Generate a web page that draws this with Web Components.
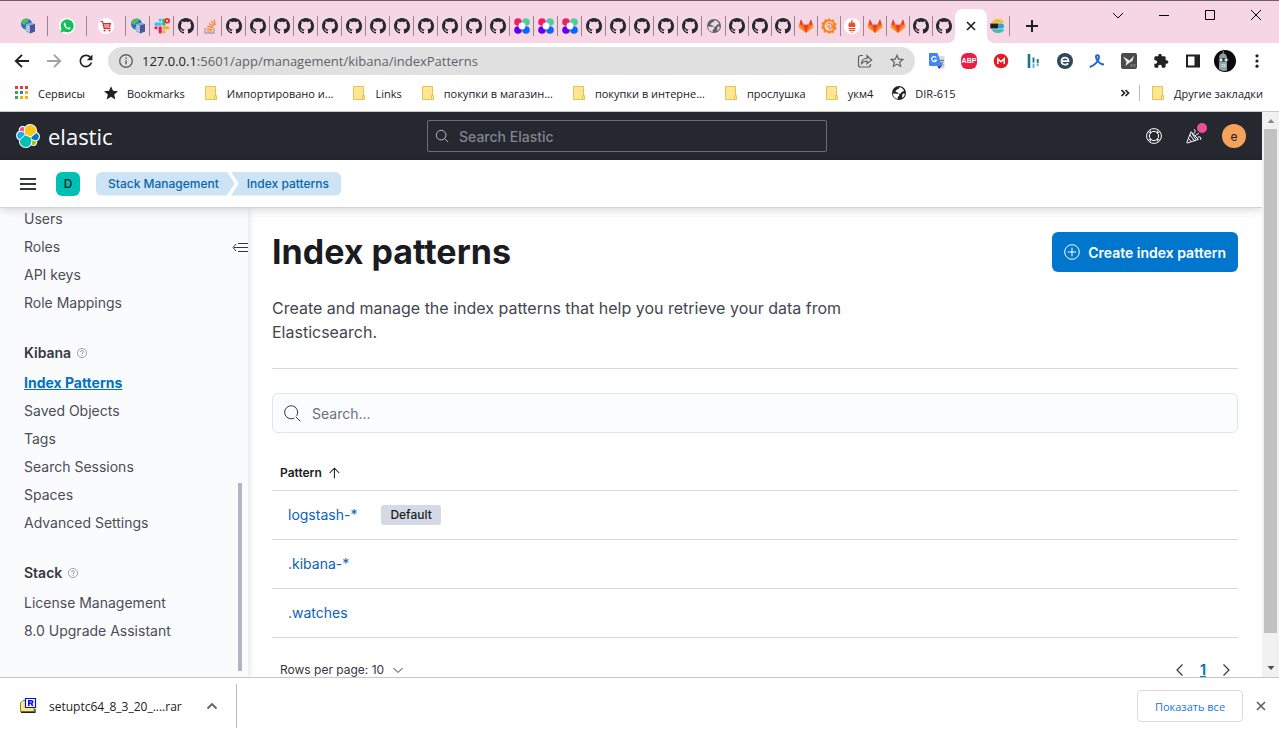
<!DOCTYPE html>
<html lang="en">
<head>
<meta charset="utf-8">
<title>Index patterns - Elastic</title>
<style>
  html, body { margin: 0; height: 100%; }
  body { font-family: Inter, "Liberation Sans", sans-serif; font-size: 14px; color: #343741; background: #fff; overflow: hidden; }
</style>
</head>
<body>
<browser-window></browser-window>
<script>
const GH = '<path fill="#24292f" d="M8 0C3.58 0 0 3.58 0 8c0 3.54 2.29 6.53 5.47 7.59.4.07.55-.17.55-.38 0-.19-.01-.82-.01-1.49-2.01.37-2.53-.49-2.69-.94-.09-.23-.48-.94-.82-1.13-.28-.15-.68-.52-.01-.53.63-.01 1.08.58 1.23.82.72 1.21 1.87.87 2.33.66.07-.52.28-.87.51-1.07-1.78-.2-3.64-.89-3.64-3.95 0-.87.31-1.59.82-2.15-.08-.2-.36-1.02.08-2.12 0 0 .67-.21 2.2.82.64-.18 1.32-.27 2-.27.68 0 1.36.09 2 .27 1.53-1.04 2.2-.82 2.2-.82.44 1.1.16 1.92.08 2.12.51.56.82 1.27.82 2.15 0 3.07-1.87 3.75-3.65 3.95.29.25.54.73.54 1.48 0 1.07-.01 1.93-.01 2.2 0 .21.15.46.55.38A8.01 8.01 0 0016 8c0-4.42-3.58-8-8-8z"/>';
const DISC = 'M3 13c2.500-1 5 .3 6.500.2 2-.2 3.300.6 3 2.300-.3 1.700-2 1.500-2.500 2.700-.3.800 0 1.800.5 2.800C6 20.500 3 17.500 3 13zM8 8c1.500-2 4.200-1 4.700-4.500 3 .3 5.800 2.300 7 5.500-1.200 1-2.800.4-3.700 1.400-1.200 1.300-.8 2.600-3 2.800-2 .2-2-1.400-3.400-2-1-.4-2.800.2-2.800-1.300 0-.8.700-1.300 1.200-1.900zM18 13c1-.3 2 0 2.800.5-.5 2.500-1.800 4.500-3.800 5.800-.8-2 .2-3.300 0-4.500-.1-.8.300-1.500 1-1.800z';
const ELASTIC = ['#fec514|M12.58 13.787l7.002 3.211 7.066-6.213a7.849 7.849 0 00.152-1.557c0-4.287-3.478-7.77-7.752-7.77a7.757 7.757 0 00-6.399 3.373l-1.176 6.118 1.107 2.838z',
  '#00bfb3|M5.333 21.228A7.964 7.964 0 005.181 22.8c0 4.3 3.49 7.797 7.781 7.797a7.776 7.776 0 006.436-3.4l1.166-6.1-1.556-2.985-7.03-3.213-6.645 6.329z',
  '#f04e98|M5.288 9.067l4.8 1.137L11.14 4.73a3.785 3.785 0 00-5.852 4.337z',
  '#1ba9f5|M4.872 10.214a5.324 5.324 0 00-3.36 5.018c0 2.2 1.362 4.164 3.407 4.944l6.733-6.104-1.236-2.649-5.544-1.21z',
  '#93c90e|M20.873 27.187a3.759 3.759 0 002.285.78 3.79 3.79 0 003.581-5.052l-4.802-1.125-1.064 5.397z',
  '#07c|M21.848 20.563l5.285 1.238a5.324 5.324 0 003.36-5.018 5.297 5.297 0 00-3.415-4.93l-6.91 6.066 1.68 2.644z'].map(s => s.split('|'));

// name: [viewBox size, markup]
const ICONS = {
  github: [16, GH],
  server: [16, '<circle cx="6.5" cy="6" r="5.5" fill="#1f6fd0"/><path d="M2 3c2-2.500 5-3 7-1.500L8 4 6 5 5 7 2 6zM5 9l3 .5-1 2H5z" fill="#4fc04a"/><path d="M6 6l5-1.500 4 1.500v7.500l-5 2-4-2z" fill="#8fa6cf"/><path d="M10 7.500l5-1.500v7.500l-5 2z" fill="#46588f"/><path d="M6.500 8l3 1M6.500 10l3 1M6.500 12l3 1" stroke="#e6edfb" stroke-width=".9"/>'],
  whatsapp: [16, '<circle cx="8" cy="8" r="8" fill="#fff"/><path d="M1.500 14.500l1-3.500a6.500 6.500 0 1 1 2.500 2.500z" fill="#12c157"/><path d="M5.700 4.500c-.8.4-1.200 1.300-.8 2.500.8 2.400 2.400 3.900 4.700 4.400 1 .2 1.900-.5 2-1.500L9.900 9l-.9.900C7.800 9.400 7 8.600 6.500 7.500l.7-.9z" fill="#fff"/>'],
  cart: [16, '<circle cx="8" cy="8" r="8" fill="#fff"/><path d="M2.500 3.500h2l1.700 7h6.300M5 5.500h7.500l-1 3.500H6M5.500 7h6.500" fill="none" stroke="#cf2e2e" stroke-width="1.100"/><circle cx="6.500" cy="12.500" r="1" fill="#cf2e2e"/><circle cx="11.500" cy="12.500" r="1" fill="#cf2e2e"/>'],
  slack: [16, '<g fill="none" stroke-width="3.200" stroke-linecap="round"><path d="M6.200 2v.1M2 6.200h4.200" stroke="#36c5f0"/><path d="M9.800 2v4.200" stroke="#2eb67d"/><path d="M14 9.800H9.800M9.800 14v-.1" stroke="#ecb22e"/><path d="M6.200 14V9.800M2 9.800h.1" stroke="#e01e5a"/></g><circle cx="13.200" cy="2.800" r="2.800" fill="#eb2d2d"/><circle cx="13.200" cy="2.800" r="1" fill="#fff"/>'],
  stack: [16, '<path d="M3 10v5h9v-5" fill="none" stroke="#a5a2a8" stroke-width="1.300"/><path d="M4.700 13h5.600M4.800 10.800l5.600.6M5.400 8.200l5.300 1.500M7 5.400l4.500 3.200M9.400 3l3 4.500M12.200 1.500l1 5.500" stroke="#f48024" stroke-width="1.200"/>'],
  dots4: [16, '<circle cx="4" cy="4" r="3.800" fill="#ef2060"/><circle cx="12" cy="4" r="3.800" fill="#48d0a0"/><circle cx="4" cy="12" r="3.800" fill="#6200ee"/><circle cx="12" cy="12" r="3.800" fill="#0a66ff"/><circle cx="8" cy="8" r="3.400" fill="#fff"/>'],
  globegray: [24, '<circle cx="12" cy="12" r="10.500" fill="#5f6368"/><path fill="#f0d6e3" d="' + DISC + '"/>'],
  globe: [24, '<circle cx="12" cy="12" r="10.500" fill="#202124"/><path fill="#fff" d="' + DISC + '"/>'],
  gitlab: [16, '<path d="M8 15L.5 9.300 3 1.300l2.400 5.500h5.200L13 1.300l2.500 8z" fill="#fc6d26"/><path d="M3 1.300l2.400 5.500H1.300zM13 1.300l-2.400 5.500h4.100zM8 15L5.400 6.800h5.200z" fill="#e24329"/><path d="M1.300 6.800L.5 9.300 8 15zM14.700 6.800l.8 2.500L8 15z" fill="#fca326"/>'],
  grafana: [16, '<path d="M8 0l2 2 3-.7.300 2.900 2.500 1.600-1.300 2.500 1.300 2.600-2.600 1.300-.5 2.800-2.900-.3L8 16l-2-1.700-3 .3-.4-2.900L0 10l1.300-2.500L.3 4.800l2.700-1L3.800 1l2.700.8z" fill="#f58a25"/><path d="M11.500 10.500a4 4 0 1 1 .3-4.300M8 10.500c-3 .3-3-4.200 0-4 2.500.2 2.500 3 .3 2.800" fill="none" stroke="#f6d5e4" stroke-width="1.300"/>'],
  prometheus: [16, '<circle cx="8" cy="8" r="8" fill="#fff"/><path d="M8 1c1.500 2-.3 2.500 1 4 .9-.6.700-1.500.7-1.500 1.500 2 2.300 3.500 1.500 5.500H4.800c-.9-2-.2-3.500.9-5 0 1 .5 1.500.8 1.500C6 4 8 3 8 1zM4.500 10h7v1.200h-7zM5 12h6v1H5zM6.200 13.700h3.600L8 14.700z" fill="#e6522c"/>'],
  elasticBar: [16, '<path d="M1.500 4.800a7.400 7.400 0 0 1 13 0z" fill="#f4bd19"/><path d="M.3 5.500H8v5H.3z" fill="#222"/><path d="M8 5.500h3.500a2.500 2.500 0 0 1 0 5H8z" fill="#28a4e0"/><path d="M1.500 11.200h13a7.400 7.400 0 0 1-13 0z" fill="#3ebeb0"/>'],
  x: [16, '<path d="M4 4l8 8M12 4l-8 8" stroke="currentColor" stroke-width="1.700"/>'],
  plus: [16, '<path d="M8 2v12M2 8h12" stroke="currentColor" stroke-width="2"/>'],
  wdown: [16, '<path d="M3 6l5 5 5-5" fill="none" stroke="currentColor" stroke-width="1"/>'],
  wmin: [16, '<path d="M3 8.500h10" stroke="currentColor"/>'],
  wmax: [16, '<path d="M3.500 3.500h9v9h-9z" fill="none" stroke="currentColor"/>'],
  wclose: [16, '<path d="M3 3l10 10M13 3L3 13" stroke="currentColor"/>'],
  back: [16, '<path d="M15 8H2M8 1.800L1.800 8 8 14.200" fill="none" stroke="currentColor" stroke-width="1.900"/>'],
  forward: [16, '<path d="M1 8h13M8 1.800L14.200 8 8 14.200" fill="none" stroke="currentColor" stroke-width="1.900"/>'],
  reload: [24, '<path fill="currentColor" transform="translate(-2.400 -2.400) scale(1.200)" d="M17.650 6.350C16.200 4.900 14.210 4 12 4c-4.420 0-7.990 3.580-7.990 8s3.570 8 7.990 8c3.730 0 6.840-2.550 7.730-6h-2.080c-.82 2.330-3.040 4-5.650 4-3.310 0-6-2.690-6-6s2.690-6 6-6c1.660 0 3.140.69 4.220 1.780L13 11h7V4l-2.350 2.350z"/>'],
  info: [16, '<circle cx="8" cy="8" r="6.300" fill="none" stroke="currentColor" stroke-width="1.400"/><path d="M8 7.200v4M8 4.500v1.500" stroke="currentColor" stroke-width="1.500"/>'],
  share: [16, '<path d="M6 2.500H3.500a2 2 0 0 0-2 2v7.500a2 2 0 0 0 2 2h8a2 2 0 0 0 2-2V11" fill="none" stroke="currentColor" stroke-width="1.200"/><path d="M4.500 10.500c.3-3.500 2-5 5.500-5V2.700L14.700 7 10 10.800V8.200c-2.500 0-4 .5-5.500 2.300z" fill="none" stroke="currentColor" stroke-width="1.200"/>'],
  starline: [24, '<path fill="currentColor" transform="translate(-1.200 -1.200) scale(1.100)" d="M22 9.240l-7.190-.62L12 2 9.190 8.630 2 9.240l5.460 4.730L5.820 21 12 17.270 18.180 21l-1.630-7.030L22 9.240zM12 15.400l-3.760 2.270 1-4.280-3.320-2.880 4.380-.38L12 6.100l1.710 4.040 4.380.38-3.320 2.880 1 4.280L12 15.400z"/>'],
  star: [24, '<path fill="#202124" d="M12 17.800l6.500 4-1.700-7.500 5.700-5-7.500-.7L12 1.700 9 8.600l-7.500.7 5.700 5-1.700 7.500z"/>'],
  apps: [16, '<g><path d="M1 1h3v3H1zM6 1h3v3H6zM11 1h3v3h-3z" fill="#e33e33"/><path d="M1 6h3v3H1z" fill="#34a853"/><path d="M6 6h3v3H6z" fill="#2a7de9"/><path d="M11 6h3v3h-3z" fill="#f4b400"/><path d="M1 11h3v3H1z" fill="#34a853"/><path d="M6 11h3v3H6zM11 11h3v3h-3z" fill="#f4b400"/></g>'],
  folder: [16, '<path d="M2.500 1.500h10v13h-10z" fill="#ffe694" stroke="#e8c34f"/><path d="M11.500 14.500v-4h2v4z" fill="#ffe694" stroke="#e8c34f"/>'],
  translate: [16, '<path d="M6 3h9.500v12.500H9z" fill="#d8dadf"/><path d="M0 0h8.500L13 13H1.500A1.500 1.500 0 0 1 0 11.500z" fill="#4285f4"/><path d="M8.500 13H13l-3 3z" fill="#2347c5"/><path d="M7.300 4.700A2.500 2.500 0 1 0 7.500 7H5.200" fill="none" stroke="#fff" stroke-width="1.200"/><path d="M10.500 7.500H15M12.700 6.500v1M11.500 12.500l2.700-4M11.500 9l3 3.500" stroke="#68707c" stroke-width=".9" fill="none"/>'],
  mega: [16, '<circle cx="8" cy="8" r="7.300" fill="#e51b23"/><path d="M4.800 11V5.800L8 8.800l3.200-3V11" fill="none" stroke="#fff" stroke-width="1.500"/>'],
  hbars: [16, '<path d="M4 1v14" stroke="#19778a" stroke-width="2.600"/><path d="M8.500 4.500v5M12.700 6v4" stroke="#19778a" stroke-width="1.900"/><path d="M8.500 10.500V15M12.700 10.500V13" stroke="#56b8c4" stroke-width="1.900"/>'],
  eball: [16, '<circle cx="8" cy="8" r="8" fill="#33475b"/><path d="M4.500 8.200h7c0-5-7-4.700-7 0 0 3.800 4.500 4.300 6.700 2.200" fill="none" stroke="#fff" stroke-width="1.700"/>'],
  ribbon: [16, '<path d="M.8 14C5 12.500 10 8.500 10 4c0-2.500-3.300-2.500-3 0 .3 3 3.500 7.500 8 7.500" fill="none" stroke="#1b66d2" stroke-width="2"/>'],
  bird: [16, '<rect width="16" height="16" rx="2" fill="#4a4a4a"/><path d="M2 3.500l5 3 1.500 1L13 2.500 11.500 8 8 10l-3.500 3 1-4z" fill="#e8e8e8"/><path d="M9.500 11h2v3h-2zM12.500 11h2v3h-2z" fill="#777"/>'],
  puzzle: [24, '<path fill="#202124" d="M20.500 11H19V7c0-1.100-.9-2-2-2h-4V3.500C13 2.120 11.880 1 10.500 1S8 2.120 8 3.500V5H4c-1.100 0-1.990.9-1.990 2v3.800H3.500c1.490 0 2.700 1.210 2.700 2.700s-1.210 2.700-2.700 2.700H2V20c0 1.100.9 2 2 2h3.800v-1.500c0-1.490 1.210-2.700 2.700-2.700s2.700 1.210 2.700 2.700V22H17c1.100 0 2-.9 2-2v-4h1.500c1.380 0 2.500-1.120 2.500-2.500S21.880 11 20.500 11z"/>'],
  panel: [16, '<path d="M2 2.500h12v11H2z" fill="#fff" stroke="#202124" stroke-width="2"/><path d="M9.500 2.500H14v11H9.500z" fill="#202124"/>'],
  bender: [22, '<circle cx="11" cy="11" r="11" fill="#0b0b0d"/><path d="M5 19V9c0-4 1.500-5.500 4-5.500S13 5 13 9v11.500c-3 1-6 .5-8-1.500z" fill="#8ea1ab"/><path d="M8.700 1h1v3h-1z" fill="#8ea1ab"/><rect x="4" y="8" width="11" height="3.500" rx="1.700" fill="#2d3438"/><circle cx="7" cy="9.800" r="1.500" fill="#f2f2dc"/><circle cx="12" cy="9.800" r="1.500" fill="#f2f2dc"/><path d="M6.500 14.500h5.500M6.500 16.500h5.500M8.500 13.500v4M10.500 13.500v4" stroke="#d9e2e5" stroke-width=".6"/>'],
  dots: [16, '<circle cx="8" cy="2.800" r="1.600"/><circle cx="8" cy="8" r="1.600"/><circle cx="8" cy="13.200" r="1.600"/>'],
  guillemet: [16, '<path d="M4.500 5l3 3-3 3M8.500 5l3 3-3 3" fill="none" stroke="#202124" stroke-width="1.700"/>'],
  elastic: [32, '<g fill="#fff" stroke="#fff" stroke-width="2.800" stroke-linejoin="round">' + ELASTIC.map(p => '<path d="' + p[1] + '"/>').join('') + '</g>' + ELASTIC.map(p => '<path fill="' + p[0] + '" d="' + p[1] + '"/>').join('')],
  search: [16, '<circle cx="7" cy="7" r="5.500" fill="none" stroke="currentColor"/><path d="M11 11l4 4" stroke="currentColor"/>'],
  searchEui: [16, '<path d="M10 13.300A6.600 6.600 0 1 1 13 10.500M12 12l4 4" fill="none" stroke="currentColor" stroke-linecap="round"/>'],
  help: [16, '<g fill="none" stroke="currentColor"><circle cx="8" cy="8" r="7.400"/><circle cx="8" cy="8" r="4.600"/><path d="M2.200 3.800L5 5.100M3.800 2.200L5.100 5M12.200 2.200L10.900 5M13.800 3.800L11 5.100M13.800 12.200L11 10.900M12.200 13.800L10.900 11M3.800 13.800L5.100 11M2.200 12.200L5 10.900" stroke-width=".9"/></g>'],
  cheer: [16, '<g fill="none" stroke="currentColor" stroke-linecap="round" stroke-linejoin="round"><path d="M5 4L.8 14.400c-.1.400.2.700.6.600L12 11.500zM4 7l4.500 6M2.500 10.500l3 3.300M6 5.500l4 6"/><path d="M8 5.500c1.500-1 1.500-2.500.5-4M9.500 7.500c1-1.500 2.500-1 3-2M12 9c1.500-.8 3.500 0 2.700 2.500"/></g>'],
  menu: [16, '<path d="M0 3h16M0 8h16M0 13h16" stroke="currentColor" stroke-width="2"/>'],
  collapse: [16, '<path d="M6 4.500h10M2 8.500h14M6 12.500h10M4 5L1 8.500 4 12" fill="none" stroke="currentColor" stroke-width="1"/>'],
  question: [16, '<circle cx="8" cy="8" r="7.300" fill="none" stroke="currentColor"/><path d="M5.800 6.500c0-3.200 4.600-3 4.500-.2 0 1.700-2.300 1.700-2.300 3.500M8 11v1.500" fill="none" stroke="currentColor" stroke-width="1.200"/>'],
  pluscircle: [16, '<circle cx="8" cy="8" r="7.300" fill="none" stroke="currentColor"/><path d="M8 3.700v8.600M3.700 8h8.600" stroke="currentColor"/>'],
  sortup: [16, '<path d="M8.500 14V3M3 8l5.500-5.500L14 8" fill="none" stroke="currentColor" stroke-width="1.200"/>'],
  down: [16, '<path d="M3.500 6L8 10.500 12.500 6" fill="none" stroke="currentColor"/>'],
  left: [16, '<path d="M10.500 2.500L5 8l5.500 5.500" fill="none" stroke="currentColor" stroke-width="1.200"/>'],
  right: [16, '<path d="M5.500 2.500L11 8l-5.500 5.500" fill="none" stroke="currentColor" stroke-width="1.200"/>'],
  caretup: [16, '<path d="M3.500 10.500L8 6l4.500 4.500" fill="none" stroke="currentColor" stroke-width="1.900"/>'],
  triup: [16, '<path d="M4.500 10h7L8 6z" fill="#8b8b8b"/>'],
  tridown: [16, '<path d="M4.500 6h7L8 10z" fill="#505050"/>'],
  rar: [16, '<path d="M.5 5L3 2.500h5V5h6v8.500H.5z" fill="#f5ea8a" stroke="#8d8a16"/><path d="M1 14.300h14V11" fill="none" stroke="#222" stroke-width="1.200"/><path d="M5.500.5h10v9h-10z" fill="#fff" stroke="#0b10e0" stroke-width="1.200"/><path d="M8.800 8V2.700h2.500c2 0 2 2.500 0 2.500H9M11 5.200L12.700 8" fill="none" stroke="#0b10e0" stroke-width="1.600"/>']
};

function define(name, css, html) {
  const tpl = document.createElement('template');
  tpl.innerHTML = '<style>*{box-sizing:border-box}button,input{font:inherit;color:inherit;background:none;border:0;padding:0;margin:0;outline:0}button{display:flex;align-items:center;justify-content:center;cursor:pointer}a{text-decoration:none;color:inherit}' + css + '</style>' + html;
  customElements.define(name, class extends HTMLElement {
    constructor() {
      super();
      this.attachShadow({ mode: 'open' }).append(tpl.content.cloneNode(true));
    }
  });
}

customElements.define('ui-icon', class extends HTMLElement {
  constructor() { super(); this.attachShadow({ mode: 'open' }); }
  connectedCallback() {
    const [box, body] = ICONS[this.getAttribute('name')];
    this.shadowRoot.innerHTML = '<style>:host{display:block;flex:none;width:16px;height:16px}svg{display:block;width:100%;height:100%;overflow:visible}</style><svg viewBox="0 0 ' + box + ' ' + box + '" aria-hidden="true" fill="currentColor">' + body + '</svg>';
  }
});
const icon = (n, cls = '') => '<ui-icon name="' + n + '" class="' + cls + '"></ui-icon>';

/* ---------- Browser chrome ---------- */
const rep = (n, k) => Array(k).fill(n);
const tab = (n, cls) => '<button class="tab ' + cls + '" role="tab" aria-label="' + n + ' tab">' + icon(n) + '</button>';
const pinned = ['server', 'whatsapp', 'cart'];
const open = ['server', 'slack', 'github', 'stack', ...rep('github', 12), ...rep('dots4', 3), ...rep('github', 5), 'globegray'];
const late = [...rep('github', 3), 'gitlab', 'grafana', 'prometheus', 'gitlab', 'gitlab', 'github', 'github'];

define('browser-tabs', `
  :host { display: flex; height: 43px; border-top: 1px solid #6f5f68; background: #f6d5e4; color: #202124; padding-left: 9px; }
  .tabs { display: flex; align-items: flex-end; }
  .tab { height: 34px; padding-bottom: 1px; width: 24px; position: relative; }
  .tab::after { content: ""; position: absolute; right: 0; top: 7px; height: 20px; width: 1px; background: #9a8490; }
  .tab { padding-right: 1px; }
  .pin { width: 39px; } .late { width: 23px; }
  .late:nth-last-child(3) { width: 22px; } .late:nth-last-child(3)::after { display: none; }
  .active { width: 32px; padding: 0; background: #fff; border-radius: 8px 8px 0 0; }
  .active::before, .active::after { content: ""; position: absolute; top: auto; bottom: 0; width: 8px; height: 8px; background: radial-gradient(circle at 0 0, transparent 8px, #fff 8px); }
  .active::before { left: -8px; } .active::after { right: -8px; background: radial-gradient(circle at 100% 0, transparent 8px, #fff 8px); }
  .new { width: 24px; height: 34px; margin: 8px 0 0 10px; }
  .win { display: flex; margin-left: auto; height: 28px; color: #000; }
  .win button { width: 46px; }
`, `<div class="tabs" role="tablist">${pinned.map(n => tab(n, 'pin')).join('')}${open.map(n => tab(n, '')).join('')}${late.map(n => tab(n, 'late')).join('')}<button class="tab active" role="tab" aria-label="Close tab">${icon('x')}</button>${tab('elasticBar', 'late')}</div>
<button class="new" aria-label="New tab">${icon('plus')}</button>
<div class="win"><button aria-label="Search tabs">${icon('wdown')}</button><button aria-label="Minimize">${icon('wmin')}</button><button aria-label="Maximize">${icon('wmax')}</button><button aria-label="Close">${icon('wclose')}</button></div>`);

define('browser-toolbar', `
  :host { display: flex; align-items: center; height: 36px; padding: 0 6px; gap: 6px; color: #202124; }
  .group { display: flex; } .group button { width: 32px; height: 28px; }
  .off { color: #a3a3a3; }
  .box { flex: 1; display: flex; align-items: center; height: 28px; border-radius: 14px; background: #e0e0e0; padding: 0 10px; color: #5f6368; }
  .box label { color: #202124; margin-left: 8px; font-size: 13px; line-height: 24px; }
  .box input { flex: 1; font-size: 13px; line-height: 24px; height: 24px; }
  .acts { display: flex; gap: 16px; }
  .big { width: 22px; height: 22px; }
  .abp { width: 16px; height: 16px; border-radius: 6px; background: #ed1e45; color: #fff; font: 700 7px/16px "Liberation Sans", sans-serif; text-align: center; }
`, `<div class="group"><button aria-label="Back">${icon('back')}</button><button class="off" aria-label="Forward">${icon('forward')}</button><button aria-label="Reload">${icon('reload')}</button></div>
<div class="box">${icon('info')}<label for="url">127.0.0.1</label><input id="url" value=":5601/app/management/kibana/indexPatterns"><div class="acts"><button aria-label="Share">${icon('share')}</button><button aria-label="Bookmark">${icon('starline')}</button></div></div>
<div class="group">${['translate', 'abp', 'mega', 'hbars', 'eball', 'ribbon', 'bird', 'puzzle', 'panel', 'bender', 'dots'].map(n => '<button aria-label="' + n + '">' + (n === 'abp' ? '<span class="abp">ABP</span>' : icon(n, n === 'bender' ? 'big' : '')) + '</button>').join('')}</div>`);

const marks = [['apps', 'Сервисы'], ['star', 'Bookmarks'], ['folder', 'Импортировано и...'], ['folder', 'Links'], ['folder', 'покупки в магазин...'], ['folder', 'покупки в интерне...'], ['folder', 'прослушка'], ['folder', 'укм4'], ['globe', 'DIR-615']];
const mark = ([i, t]) => '<a href="#">' + icon(i) + '<span>' + t + '</span></a>';
define('browser-bookmarks', `
  :host { display: flex; align-items: center; justify-content: space-between; height: 33px; padding: 0 16px 4px 14px; border-bottom: 1px solid #c9c9cb; color: #202124; font-size: 11px; }
  nav { display: flex; align-items: center; gap: 18px; white-space: nowrap; }
  a { display: flex; align-items: center; gap: 8px; }
  .end { gap: 6px; } .end a { border-left: 1px solid #b9bbbf; padding-left: 10px; }
`, `<nav aria-label="Bookmarks">${marks.map(mark).join('')}</nav><nav class="end"><button aria-label="More bookmarks">${icon('guillemet')}</button>${mark(['folder', 'Другие закладки'])}</nav>`);

define('download-bar', `
  :host { display: flex; align-items: center; height: 57px; border-top: 1px solid #c6c6c8; background: #fff; color: #202124; padding: 0 10px 0 20px; font-size: 12px; }
  .file { display: flex; align-items: center; height: 44px; border-right: 1px solid #b9bbbf; padding-right: 16px; }
  .name { margin: 0 22px 0 13px; } .file > button:last-child { color: #5f6368; }
  .all { margin-left: auto; width: 106px; height: 32px; border: 1px solid #dadce0; border-radius: 4px; color: #1a73e8; font-size: 11px; }
  .x { margin-left: 10px; color: #5f6368; }
`, `<div class="file">${icon('rar')}<button class="name">setuptc64_8_3_20_....rar</button><button aria-label="Download menu">${icon('caretup')}</button></div><button class="all">Показать все</button><button class="x" aria-label="Close downloads">${icon('x')}</button>`);

/* ---------- Kibana ---------- */
define('kibana-header', `
  :host { display: grid; grid-template-columns: 1fr 400px 1fr; align-items: center; height: 48px; flex: none; padding: 0 24px 0 16px; background: #25282f; color: #fff; }
  .logo { display: flex; align-items: center; gap: 8px; font: 400 22px/32px "Open Sans", sans-serif; } .logo ui-icon { width: 24px; height: 24px; }
  label { display: flex; align-items: center; gap: 8px; height: 32px; border: 1px solid #6a6d76; border-radius: 2px; padding: 0 7px; color: #c8cace; }
  label ui-icon { width: 14px; height: 14px; }
  input { flex: 1; margin-left: 2px; font-weight: 500; } input::placeholder { color: #81858f; opacity: 1; }
  .right { display: flex; justify-content: flex-end; gap: 20px; margin-right: -8px; align-items: center; }
  .right button { position: relative; width: 20px; height: 24px; }
  .dot::after { content: ""; position: absolute; right: -3px; top: -1px; width: 10px; height: 10px; border-radius: 50%; background: #f04e98; }
  .right .who { width: 24px; border-radius: 50%; background: #f5a35c; color: #1a1c21; font-size: 12px; margin-left: -2px; }
`, `<a class="logo" href="#">${icon('elastic')}<span>elastic</span></a>
<label>${icon('search')}<input placeholder="Search Elastic" aria-label="Search Elastic"></label>
<div class="right"><button aria-label="Help">${icon('help')}</button><button class="dot" aria-label="News">${icon('cheer')}</button><button class="who">e</button></div>`);

define('kibana-crumbs', `
  :host { display: flex; align-items: center; flex: none; height: 48px; padding: 0 20px; border-bottom: 1px solid #d0d3dc; box-shadow: 0 1px 8px rgba(0,0,0,.12), 0 4px 12px rgba(0,0,0,.05); background: #fff; position: relative; z-index: 2; }
  .space { width: 24px; height: 24px; border-radius: 6px; background: #00bfb3; color: #1a1c21; font-size: 12px; font-weight: 500; margin: 0 16px 0 20px; }
  nav { display: flex; font-size: 12px; font-weight: 500; line-height: 24px; color: #0b64a9; border-radius: 6px; overflow: hidden; }
  nav a { background: #cce4f5; }
  nav a:first-child { padding: 0 16px 0 12px; clip-path: polygon(0 0, calc(100% - 8px) 0, 100% 50%, calc(100% - 8px) 100%, 0 100%); }
  nav a:last-child { padding: 0 12px 0 16px; margin-left: -4px; clip-path: polygon(0 0, 100% 0, 100% 100%, 0 100%, 8px 50%); }
`, `<button aria-label="Menu">${icon('menu')}</button><button class="space">D</button><nav aria-label="Breadcrumbs"><a href="#">Stack Management</a><a href="#">Index patterns</a></nav>`);

const links = (list) => list.map(t => '<li><a href="#"' + (t === 'Index Patterns' ? ' class="on"' : '') + '>' + t + '</a></li>').join('');
define('side-nav', `
  :host { display: flex; width: 248px; flex: none; background: #fafbfd; box-shadow: 0 0 8px rgba(0,0,0,.16); position: relative; line-height: 20px; }
  nav { flex: 1; padding: 1px 0 0 24px; overflow: hidden; }
  ul { list-style: none; margin: 0 0 30px; padding: 0; display: flex; flex-direction: column; gap: 8px; color: #4a4d57; }
  h2 { display: flex; align-items: center; gap: 6px; margin: 0 0 10px; font-size: 14px; line-height: 20px; font-weight: 600; }
  h2 ui-icon { width: 10px; height: 10px; color: #69707d; }
  .on { color: #0071c2; font-weight: 700; text-decoration: underline; }
  .fold { position: absolute; right: 0; top: 31px; }
  .thumb { position: absolute; right: 6px; bottom: 6px; width: 4px; height: 40%; background: #b2b4bf; }
`, `<nav aria-label="Management"><ul>${links(['Users', 'Roles', 'API keys', 'Role Mappings'])}</ul><h2>Kibana ${icon('question')}</h2><ul>${links(['Index Patterns', 'Saved Objects', 'Tags', 'Search Sessions', 'Spaces', 'Advanced Settings'])}</ul><h2>Stack ${icon('question')}</h2><ul>${links(['License Management', '8.0 Upgrade Assistant'])}</ul></nav><button class="fold" aria-label="Collapse">${icon('collapse')}</button><div class="thumb"></div>`);

define('index-patterns', `
  :host { display: block; flex: 1; min-width: 0; padding: 24px; }
  header { display: flex; justify-content: space-between; align-items: center; }
  h1 { margin: 0; font-size: 34px; line-height: 40px; font-weight: 700; color: #1a1c21; }
  .create { height: 40px; gap: 8px; padding: 0 12px; border-radius: 6px; background: #07c; color: #fff; font-weight: 600; }
  p { margin: 24px 0 0; padding-bottom: 24px; border-bottom: 1px solid #d3dae6; font-size: 16px; line-height: 24px; color: #43464f; }
  p span { display: block; max-width: 600px; }
  .find { display: flex; align-items: center; gap: 12px; height: 40px; margin: 24px 0; padding: 0 11px; border: 1px solid #e0e4ee; border-radius: 6px; background: #fbfcfd; }
  .find input { flex: 1; } .find input::placeholder { color: #69707d; opacity: 1; }
  table { width: 100%; border-collapse: collapse; line-height: 24px; }
  th, td { text-align: left; padding: 0 16px; border-bottom: 1px solid #d3dae6; height: 49px; font-weight: 400; }
  th { height: 33px; padding: 0 8px; color: #1a1c21; }
  th button { font-size: 12px; font-weight: 600; gap: 5px; } th ui-icon { width: 14px; height: 14px; }
  td a { color: #0a62b8; }
  td div { display: flex; align-items: center; gap: 24px; }
  mark { background: #d3dae6; color: #1a1c21; font-size: 12px; font-weight: 500; line-height: 20px; padding: 0 9px; border-radius: 3px; }
  footer { display: flex; justify-content: space-between; align-items: center; padding: 20px 4px 0 8px; font-size: 12px; line-height: 24px; }
  footer div { display: flex; gap: 8px; align-items: center; } .rows { gap: 6px; } .page { font-size: 14px; font-weight: 700; color: #07c; text-decoration: underline; padding: 0 4px; }
`, `<header><h1>Index patterns</h1><button class="create">${icon('pluscircle')}Create index pattern</button></header>
<p><span>Create and manage the index patterns that help you retrieve your data from Elasticsearch.</span></p>
<label class="find">${icon('searchEui')}<input type="search" placeholder="Search..." aria-label="Search"></label>
<table><thead><tr><th><button>Pattern ${icon('sortup')}</button></th></tr></thead><tbody><tr><td><div><a href="#">logstash-*</a><mark>Default</mark></div></td></tr><tr><td><a href="#">.kibana-*</a></td></tr><tr><td><a href="#">.watches</a></td></tr></tbody></table>
<footer><button class="rows">Rows per page: 10 ${icon('down')}</button><div><button aria-label="Previous">${icon('left')}</button><a class="page" href="#">1</a><button aria-label="Next">${icon('right')}</button></div></footer>`);

define('page-scrollbar', `
  :host { display: flex; flex-direction: column; width: 17px; flex: none; background: #f1f1f1; padding: 1px 0; align-items: center; }
  .track { flex: 1; align-self: stretch; padding: 0 2px; } .thumb { height: 95%; background: #c1c1c1; }
`, `${icon('triup')}<div class="track"><div class="thumb"></div></div>${icon('tridown')}`);

define('kibana-app', `
  :host { display: flex; min-height: 0; overflow: hidden; }
  .col { flex: 1; min-width: 0; display: flex; flex-direction: column; overflow: hidden; }
  .body { flex: 1; min-height: 0; display: flex; overflow: hidden; }
`, `<div class="col"><kibana-header></kibana-header><kibana-crumbs></kibana-crumbs><div class="body"><side-nav></side-nav><index-patterns></index-patterns></div></div><page-scrollbar></page-scrollbar>`);

define('browser-window', `
  :host { display: flex; flex-direction: column; height: 100vh; }
  browser-tabs, browser-toolbar, browser-bookmarks, download-bar { flex: none; font-family: "Open Sans", "Noto Sans", sans-serif; }
  kibana-app { flex: 1; }
`, `<browser-tabs></browser-tabs><browser-toolbar></browser-toolbar><browser-bookmarks></browser-bookmarks><kibana-app></kibana-app><download-bar></download-bar>`);
</script>
</body>
</html>
